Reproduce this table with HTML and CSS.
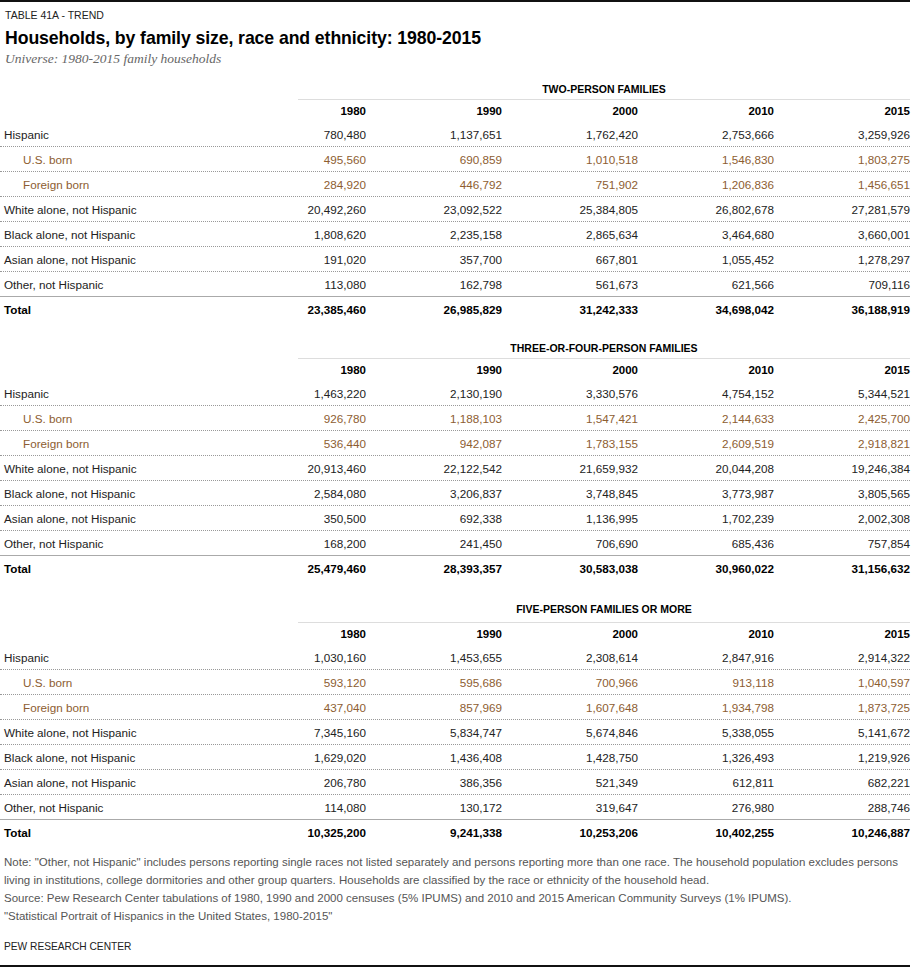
FILE: index.html
```html
<!DOCTYPE html>
<html>
<head>
<meta charset="utf-8">
<link rel="stylesheet" href="styles.css">
</head>
<body>
<div class="page">
  <div class="kicker">TABLE 41A - TREND</div>
  <h1 class="title">Households, by family size, race and ethnicity: 1980-2015</h1>
  <div class="universe">Universe: 1980-2015 family households</div>

  <section class="block block-1">
    <div class="head"><div class="head-title">TWO-PERSON FAMILIES</div></div>
    <div class="row years"><span></span><span>1980</span><span>1990</span><span>2000</span><span>2010</span><span>2015</span></div>
    <div class="row"><span class="lbl">Hispanic</span><span>780,480</span><span>1,137,651</span><span>1,762,420</span><span>2,753,666</span><span>3,259,926</span></div>
    <div class="row sub"><span class="lbl">U.S. born</span><span>495,560</span><span>690,859</span><span>1,010,518</span><span>1,546,830</span><span>1,803,275</span></div>
    <div class="row sub"><span class="lbl">Foreign born</span><span>284,920</span><span>446,792</span><span>751,902</span><span>1,206,836</span><span>1,456,651</span></div>
    <div class="row"><span class="lbl">White alone, not Hispanic</span><span>20,492,260</span><span>23,092,522</span><span>25,384,805</span><span>26,802,678</span><span>27,281,579</span></div>
    <div class="row"><span class="lbl">Black alone, not Hispanic</span><span>1,808,620</span><span>2,235,158</span><span>2,865,634</span><span>3,464,680</span><span>3,660,001</span></div>
    <div class="row"><span class="lbl">Asian alone, not Hispanic</span><span>191,020</span><span>357,700</span><span>667,801</span><span>1,055,452</span><span>1,278,297</span></div>
    <div class="row last"><span class="lbl">Other, not Hispanic</span><span>113,080</span><span>162,798</span><span>561,673</span><span>621,566</span><span>709,116</span></div>
    <div class="row total"><span class="lbl">Total</span><span>23,385,460</span><span>26,985,829</span><span>31,242,333</span><span>34,698,042</span><span>36,188,919</span></div>
  </section>

  <section class="block block-2">
    <div class="head"><div class="head-title">THREE-OR-FOUR-PERSON FAMILIES</div></div>
    <div class="row years"><span></span><span>1980</span><span>1990</span><span>2000</span><span>2010</span><span>2015</span></div>
    <div class="row"><span class="lbl">Hispanic</span><span>1,463,220</span><span>2,130,190</span><span>3,330,576</span><span>4,754,152</span><span>5,344,521</span></div>
    <div class="row sub"><span class="lbl">U.S. born</span><span>926,780</span><span>1,188,103</span><span>1,547,421</span><span>2,144,633</span><span>2,425,700</span></div>
    <div class="row sub"><span class="lbl">Foreign born</span><span>536,440</span><span>942,087</span><span>1,783,155</span><span>2,609,519</span><span>2,918,821</span></div>
    <div class="row"><span class="lbl">White alone, not Hispanic</span><span>20,913,460</span><span>22,122,542</span><span>21,659,932</span><span>20,044,208</span><span>19,246,384</span></div>
    <div class="row"><span class="lbl">Black alone, not Hispanic</span><span>2,584,080</span><span>3,206,837</span><span>3,748,845</span><span>3,773,987</span><span>3,805,565</span></div>
    <div class="row"><span class="lbl">Asian alone, not Hispanic</span><span>350,500</span><span>692,338</span><span>1,136,995</span><span>1,702,239</span><span>2,002,308</span></div>
    <div class="row last"><span class="lbl">Other, not Hispanic</span><span>168,200</span><span>241,450</span><span>706,690</span><span>685,436</span><span>757,854</span></div>
    <div class="row total"><span class="lbl">Total</span><span>25,479,460</span><span>28,393,357</span><span>30,583,038</span><span>30,960,022</span><span>31,156,632</span></div>
  </section>

  <section class="block block-3">
    <div class="head"><div class="head-title">FIVE-PERSON FAMILIES OR MORE</div></div>
    <div class="row years"><span></span><span>1980</span><span>1990</span><span>2000</span><span>2010</span><span>2015</span></div>
    <div class="row"><span class="lbl">Hispanic</span><span>1,030,160</span><span>1,453,655</span><span>2,308,614</span><span>2,847,916</span><span>2,914,322</span></div>
    <div class="row sub"><span class="lbl">U.S. born</span><span>593,120</span><span>595,686</span><span>700,966</span><span>913,118</span><span>1,040,597</span></div>
    <div class="row sub"><span class="lbl">Foreign born</span><span>437,040</span><span>857,969</span><span>1,607,648</span><span>1,934,798</span><span>1,873,725</span></div>
    <div class="row"><span class="lbl">White alone, not Hispanic</span><span>7,345,160</span><span>5,834,747</span><span>5,674,846</span><span>5,338,055</span><span>5,141,672</span></div>
    <div class="row"><span class="lbl">Black alone, not Hispanic</span><span>1,629,020</span><span>1,436,408</span><span>1,428,750</span><span>1,326,493</span><span>1,219,926</span></div>
    <div class="row"><span class="lbl">Asian alone, not Hispanic</span><span>206,780</span><span>386,356</span><span>521,349</span><span>612,811</span><span>682,221</span></div>
    <div class="row last"><span class="lbl">Other, not Hispanic</span><span>114,080</span><span>130,172</span><span>319,647</span><span>276,980</span><span>288,746</span></div>
    <div class="row total"><span class="lbl">Total</span><span>10,325,200</span><span>9,241,338</span><span>10,253,206</span><span>10,402,255</span><span>10,246,887</span></div>
  </section>

  <div class="notes">
    <p>Note: "Other, not Hispanic" includes persons reporting single races not listed separately and persons reporting more than one race. The household population excludes persons living in institutions, college dormitories and other group quarters. Households are classified by the race or ethnicity of the household head.</p>
    <p>Source: Pew Research Center tabulations of 1980, 1990 and 2000 censuses (5% IPUMS) and 2010 and 2015 American Community Surveys (1% IPUMS).</p>
    <p>"Statistical Portrait of Hispanics in the United States, 1980-2015"</p>
  </div>
  <div class="brand">PEW RESEARCH CENTER</div>
</div>
</body>
</html>
```

FILE: styles.css
```css
html, body {
  margin: 0;
  padding: 0;
  background: #fff;
}
body {
  font-family: "Liberation Sans", Arial, sans-serif;
  color: #222;
}
.page {
  width: 910px;
  border-top: 2px solid #111;
  border-bottom: 2px solid #111;
  padding-top: 6px;
  padding-bottom: 9px;
}
.kicker {
  font-size: 10.5px;
  line-height: 14px;
  color: #222;
  padding-left: 5px;
}
.title {
  margin: 4px 0 0;
  font-size: 17.7px;
  line-height: 24px;
  font-weight: bold;
  color: #000;
  padding-left: 5px;
  letter-spacing: -0.1px;
}
.universe {
  margin-top: 1px;
  font-family: "Liberation Serif", "Times New Roman", serif;
  font-style: italic;
  font-size: 13.5px;
  line-height: 16px;
  color: #666;
  padding-left: 5px;
}
.block-1 {
  margin-top: 14px;
}
.block-2 {
  margin-top: 19px;
}
.block-3 {
  margin-top: 21px;
}
.block-3 .head-title {
  padding-bottom: 5px;
}
.head {
  padding-left: 298px;
}
.head-title {
  font-size: 10.5px;
  font-weight: bold;
  line-height: 16px;
  padding-bottom: 2px;
  text-align: center;
  color: #000;
  border-bottom: 1px solid #ddd;
}
.row {
  display: grid;
  grid-template-columns: 230px repeat(5, 136px);
  height: 24px;
  align-items: center;
  border-bottom: 1px dotted #999;
  font-size: 11.7px;
}
.row > span {
  text-align: right;
}
.row > span.lbl {
  text-align: left;
  padding-left: 4px;
}
.row.years {
  height: 22px;
  border-bottom: none;
  font-weight: bold;
  color: #000;
  font-size: 11.5px;
}
.row.sub {
  color: #8d5d31;
}
.row.sub > span.lbl {
  padding-left: 23px;
}
.row.last {
  border-bottom: 1px solid #aaa;
}
.row.total {
  border-bottom: none;
  font-weight: bold;
  color: #000;
}
.notes {
  margin-top: 9px;
  padding-left: 4px;
  padding-right: 6px;
  font-size: 11.5px;
  line-height: 18px;
  color: #555;
}
.notes p {
  margin: 0;
}
.brand {
  margin-top: 13px;
  padding-left: 4px;
  font-size: 10.2px;
  line-height: 18px;
  color: #222;
}
```
